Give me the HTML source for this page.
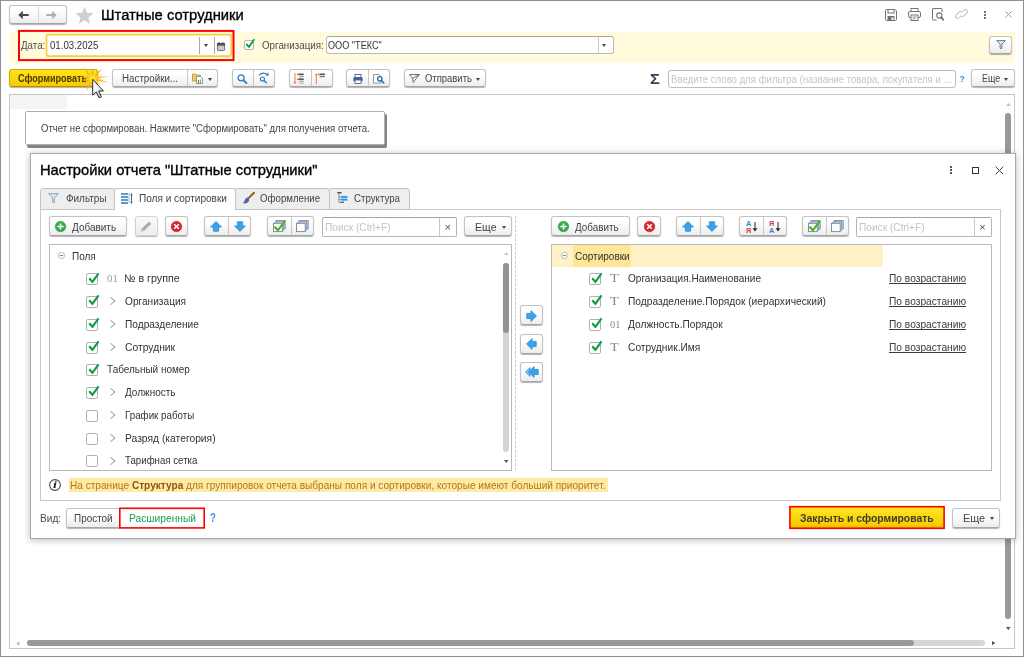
<!DOCTYPE html>
<html lang="ru">
<head>
<meta charset="utf-8">
<title>Штатные сотрудники</title>
<style>
*{box-sizing:border-box;margin:0;padding:0}
html,body{width:1024px;height:657px;overflow:hidden;background:#fff}
body{font-family:"Liberation Sans",sans-serif;font-size:10px;color:#333;position:relative}
.a{position:absolute}
.t{position:absolute;white-space:nowrap;color:#333;z-index:5}
.btn{position:absolute;border:1px solid #c2c2c2;border-bottom-color:#a6a6a6;border-radius:3px;background:linear-gradient(#ffffff 25%,#ededed);box-shadow:0 1px 1px rgba(0,0,0,.3)}
.btn.y{background:linear-gradient(#ffe51a,#f7cb00);border-color:#d0a800;border-bottom-color:#b08f00}
.inp{position:absolute;border:1px solid #b5b5b5;border-top-color:#a3a3a3;border-radius:2px;background:#fff}
.caret{position:absolute;width:0;height:0;border-left:2.5px solid transparent;border-right:2.5px solid transparent;border-top:3px solid #454545}
.sep{position:absolute;width:1px;background:#c8c8c8}
.cb{position:absolute;width:11px;height:11px;border:1px solid #b0b0b0;border-radius:2px;background:#fff}
.cb.c::after{content:"";position:absolute;left:0;top:0}
svg{position:absolute;overflow:visible}
</style>
</head>
<body>
<!-- window border -->
<div class="a" style="left:0;top:0;width:1024px;height:657px;border:1px solid #909090;z-index:60;pointer-events:none"></div>

<!-- ===== header ===== -->
<div class="btn" style="left:9px;top:5px;width:58px;height:19px;border-radius:3px"></div>
<div class="sep" style="left:38px;top:6px;height:17px;background:#d8d8d8"></div>
<svg style="left:18px;top:10.300px" width="11" height="10" viewBox="0 0 11 10"><path d="M0.300 5 L4.800 0.800 V3.900 H10.700 V6.100 H4.800 V9.200 Z" fill="#4a4a4a"/></svg>
<svg style="left:46px;top:10.300px" width="11" height="10" viewBox="0 0 11 10"><path d="M10.700 5 L6.200 0.800 V3.900 H0.300 V6.100 H6.200 V9.200 Z" fill="#b0b0b0"/></svg>
<svg style="left:75px;top:5.800px" width="19" height="19" viewBox="0 0 18 18"><path d="M9 0.600 L11.400 6.500 L17.600 6.900 L12.800 10.900 L14.300 17 L9 13.600 L3.700 17 L5.200 10.900 L0.400 6.900 L6.600 6.500 Z" fill="#d0d0d0"/></svg>

<!-- top right icons -->
<svg style="left:885px;top:9px" width="12" height="12" viewBox="0 0 12 12"><path d="M0.500 1.500 a1 1 0 0 1 1 -1 H10 L11.500 2 V10.500 a1 1 0 0 1 -1 1 H1.500 a1 1 0 0 1 -1 -1 Z" fill="#fff" stroke="#757575"/><rect x="3" y="0.500" width="6" height="3.500" fill="#fff" stroke="#757575"/><rect x="2.500" y="7" width="7" height="4.500" fill="#757575"/><rect x="6.500" y="8.500" width="2" height="2.500" fill="#fff"/></svg>
<svg style="left:908px;top:8px" width="13" height="13" viewBox="0 0 13 13"><rect x="3" y="0.500" width="7" height="3.500" fill="#fff" stroke="#757575"/><rect x="0.500" y="3.500" width="12" height="6" rx="1.500" fill="#fff" stroke="#757575"/><rect x="3" y="7" width="7" height="5.500" fill="#fff" stroke="#757575"/><path d="M4.500 9 H8.500 M4.500 10.800 H7.500" stroke="#757575" stroke-width=".8"/></svg>
<svg style="left:932px;top:8px" width="12" height="13" viewBox="0 0 12 13"><path d="M10 4 V1 a.5 .5 0 0 0 -.5 -.5 H1 a.5 .5 0 0 0 -.5 .5 V11.500 a.5 .5 0 0 0 .5 .5 H4.500" fill="none" stroke="#757575"/><circle cx="7.300" cy="7.500" r="2.600" fill="#fff" stroke="#757575" stroke-width="1.100"/><path d="M9.200 9.400 L11.300 11.800" stroke="#6a6a6a" stroke-width="1.700" stroke-linecap="round"/></svg>
<svg style="left:955px;top:8px" width="13" height="12" viewBox="0 0 13 12"><g fill="none" stroke="#c6c6c6" stroke-width="1.200" stroke-linecap="round"><path d="M5.300 8.800 L4.300 9.800 a2.100 2.100 0 0 1 -3 -3 L4 4.100 a2.100 2.100 0 0 1 3 0"/><path d="M7.700 3.200 L8.700 2.200 a2.100 2.100 0 0 1 3 3 L9 7.900 a2.100 2.100 0 0 1 -3 0"/></g></svg>
<div class="a" style="left:984px;top:11px;width:2px;height:2px;background:#757575;box-shadow:0 3px 0 #757575,0 6px 0 #757575"></div>
<svg style="left:1005px;top:11px" width="7" height="7" viewBox="0 0 7 7"><path d="M0.500 0.500 L6.500 6.500 M6.500 0.500 L0.500 6.500" stroke="#9a9a9a" stroke-width="1"/></svg>

<!-- yellow band -->
<div class="a" style="left:9px;top:32px;width:1006px;height:31px;background:#fffbdc"></div>
<svg style="left:17px;top:29px;z-index:6" width="219" height="34" viewBox="17 29 219 34"><rect x="19" y="30.900" width="214.500" height="29.200" fill="none" stroke="#ff0000" stroke-width="2"/></svg>
<svg style="left:45px;top:33px" width="188" height="25" viewBox="45 33 188 25"><rect x="46.550" y="34.600" width="184.650" height="21.500" rx="1.600" fill="#fff" stroke="#fbcd30" stroke-width="1.600"/></svg>
<div class="sep" style="left:199px;top:37px;height:17px;background:#a8a8a8"></div>
<div class="caret" style="left:203.500px;top:44.300px"></div>
<div class="sep" style="left:214px;top:37px;height:17px;background:#a8a8a8"></div>
<svg style="left:217px;top:41.500px" width="8" height="9" viewBox="0 0 8 9"><rect x="0.400" y="1.400" width="7.200" height="7.200" rx=".8" fill="#c9c9c9" stroke="#555" stroke-width=".8"/><rect x="0" y="1" width="8" height="2.600" fill="#505050"/><rect x="1.600" y="0" width="1" height="1.800" fill="#505050"/><rect x="5.400" y="0" width="1" height="1.800" fill="#505050"/></svg>

<div class="cb" style="left:244px;top:40px;width:10px;height:10px;border-color:#b4b4b4"></div>
<svg class="chk" style="left:244px;top:38px" width="12" height="12" viewBox="0 0 12 12"><path d="M2.200 6 L5 8.800 L10.300 1.300" fill="none" stroke="#0d9b48" stroke-width="1.800"/></svg>
<div class="inp" style="left:326px;top:36px;width:288px;height:18px;border-color:#b9b9b9;border-top-color:#a8a8a8;border-radius:3px"></div>
<div class="sep" style="left:598px;top:37px;height:16px"></div>
<div class="caret" style="left:602.200px;top:44.200px"></div>
<div class="btn" style="left:989px;top:36px;width:23px;height:18px"></div>
<svg style="left:996px;top:40px" width="10" height="9" viewBox="0 0 10 9"><path d="M0.600 0.600 H9.400 L5.900 4.200 V8.400 H4.100 V4.200 Z" fill="#dfe7ee" stroke="#6b7c8c" stroke-width="1" stroke-linejoin="round"/></svg>

<!-- toolbar -->
<div class="btn y" style="left:9px;top:69px;width:89px;height:18px"></div>
<!-- starburst + cursor -->
<svg style="left:80px;top:66px;z-index:7" width="32" height="34" viewBox="80 66 32 34">
<g><path d="M82.0 77.5 L88.4 76.3 L83.6 67.6 L90.9 74.2 L92.9 68.8 L94.0 74.4 L102.4 68.4 L96.1 76.5 L109.0 76.6 L96.5 78.6 L109.6 82.5 L95.7 80.8 L97.8 87.0 L92.5 82.6 L86.3 90.8 L89.3 81.5 L82.4 84.2 L88.0 79.3 Z" fill="#f2b318" opacity=".9"/><path d="M85.0 74.0 L89.8 75.9 L88.0 71.5 L92.3 74.9 L97.0 71.5 L94.9 76.2 L104.0 73.5 L95.6 77.8 L105.0 79.5 L95.4 79.5 L101.0 84.5 L93.7 81.3 L92.0 86.0 L91.0 81.5 L86.0 86.0 L89.4 80.2 L84.0 80.5 L88.8 77.8 Z" fill="#fad43c" opacity=".9"/></g>
<circle cx="92.200" cy="78.300" r="3.200" fill="url(#sg)"/>
<path d="M92.700 79.300 V95.200 L96.300 91.900 L99 97.900 L101.400 96.800 L98.700 91 H103.400 Z" fill="url(#cg)" stroke="#2b2b2b" stroke-width="1"/>
<defs><radialGradient id="sg"><stop offset="0" stop-color="#fff200"/><stop offset=".6" stop-color="#ffe400" stop-opacity=".9"/><stop offset="1" stop-color="#fbd000" stop-opacity="0"/></radialGradient><linearGradient id="cg" x1="0" y1="0" x2="1" y2="1"><stop offset="0" stop-color="#fff"/><stop offset=".5" stop-color="#f2f2f2"/><stop offset="1" stop-color="#9a9a9a"/></linearGradient></defs>
</svg>

<div class="btn" style="left:112px;top:69px;width:106px;height:18px"></div>
<div class="sep" style="left:187px;top:70px;height:16px"></div>
<svg style="left:192px;top:73px" width="11" height="11" viewBox="0 0 11 11"><path d="M0.500 1 H3.500 L4.300 2 H8.500 V8 H0.500 Z" fill="#ecc572" stroke="#c59a3e" stroke-width=".9"/><path d="M4.500 3.500 H8.500 L10.500 5.500 V10.500 H4.500 Z" fill="#fff" stroke="#7b8a99" stroke-width=".9"/><rect x="6" y="7" width="1" height="3" fill="#e04a3a"/><rect x="7.800" y="6.300" width="1" height="3.700" fill="#3aa655"/></svg>
<div class="caret" style="left:207.500px;top:78px"></div>

<div class="btn" style="left:232px;top:69px;width:43px;height:18px"></div>
<div class="sep" style="left:253px;top:70px;height:16px"></div>
<svg style="left:237px;top:73.500px" width="11" height="11" viewBox="0 0 11 11"><circle cx="4.100" cy="3.800" r="3" fill="#fff" stroke="#2f78b7" stroke-width="1.300"/><path d="M6.300 6.100 L9.500 9.200" stroke="#2f78b7" stroke-width="1.700" stroke-linecap="round"/></svg>
<svg style="left:258px;top:72px" width="12" height="12" viewBox="0 0 12 12"><circle cx="4.400" cy="7" r="2" fill="#fff" stroke="#2f78b7" stroke-width="1.100"/><path d="M6 8.600 L8.400 10.800" stroke="#2f78b7" stroke-width="1.400" stroke-linecap="round"/><path d="M0.800 3.200 Q4.800 -0.600 9.300 2.500" fill="none" stroke="#2f78b7" stroke-width="1.100"/><path d="M7.600 3.700 L10.900 3.500 L10.300 0.500 Z" fill="#2f78b7"/></svg>

<div class="btn" style="left:289px;top:69px;width:44px;height:18px"></div>
<div class="sep" style="left:311px;top:70px;height:16px"></div>
<svg style="left:293px;top:73px" width="12" height="12" viewBox="0 0 12 12"><path d="M2 0 V10" stroke="#ee7c3e" stroke-width="1"/><path d="M0.600 8.800 L2 11.300 L3.400 8.800 Z" fill="#ee7c3e"/><g fill="#555"><rect x="3.800" y="0.800" width="1" height="1"/><rect x="5.300" y="0.500" width="5.400" height="1.700"/><rect x="6.300" y="3.200" width="4.400" height="1" fill="#888"/><rect x="3.800" y="5.700" width="1" height="1"/><rect x="5.300" y="5.400" width="5.400" height="1.700"/><rect x="6.300" y="8.100" width="4.400" height="1" fill="#999"/><rect x="6.300" y="10" width="4.400" height="1" fill="#bbb"/></g></svg>
<svg style="left:314px;top:73px" width="12" height="12" viewBox="0 0 12 12"><path d="M2.300 1 V11.300" stroke="#ee7c3e" stroke-width="1"/><path d="M0.900 2.500 L2.300 0 L3.700 2.500 Z" fill="#ee7c3e"/><g fill="#555"><rect x="4" y="0.800" width="1" height="1"/><rect x="5.500" y="0.500" width="5.400" height="1.700"/><rect x="5.500" y="3" width="5.400" height="1.200" fill="#777"/></g></svg>

<div class="btn" style="left:346px;top:69px;width:44px;height:18px"></div>
<div class="sep" style="left:368px;top:70px;height:16px"></div>
<svg style="left:353px;top:73.500px" width="10" height="10" viewBox="0 0 10 10"><rect x="2" y="0.500" width="6" height="3" fill="#fff" stroke="#4a6490" stroke-width=".9"/><rect x="0.300" y="3" width="9.400" height="4.500" rx="1.500" fill="#4a6490"/><rect x="2" y="6" width="6" height="3.500" fill="#fff" stroke="#4a6490" stroke-width=".9"/></svg>
<svg style="left:373px;top:74px" width="12" height="10" viewBox="0 0 12 10"><path d="M0.500 0.500 H5.800 L8 2.700 V9 H0.500 Z" fill="#fff" stroke="#7f8fa0" stroke-width=".9"/><circle cx="6.800" cy="4.800" r="2.200" fill="#fff" stroke="#2c73b5" stroke-width="1.400"/><path d="M8.500 6.600 L10.800 9" stroke="#2c73b5" stroke-width="1.700" stroke-linecap="round"/></svg>

<div class="btn" style="left:404px;top:69px;width:82px;height:18px"></div>
<svg style="left:409px;top:74px" width="11" height="9" viewBox="0 0 11 9"><path d="M0.600 0.600 H10.400 L4.200 8.400 L3.600 4.300 Z M10.400 0.600 L3.600 4.300" fill="#fff" stroke="#5a5a5a" stroke-width=".9" stroke-linejoin="round"/></svg>
<div class="caret" style="left:475.500px;top:78px"></div>

<div class="inp" style="left:668px;top:70px;width:288px;height:18px;border-color:#bcbcbc;border-radius:3px"></div>
<div class="btn" style="left:971px;top:69px;width:44px;height:18px"></div>
<div class="caret" style="left:1004px;top:78px"></div>

<!-- report area -->
<div class="a" style="left:9px;top:94px;width:1006px;height:555px;border:1px solid #c6c6c6;background:#fff"></div>
<div class="a" style="left:10px;top:95px;width:57px;height:14px;background:#f5f5f5"></div>
<div class="a" style="left:25px;top:111px;width:360px;height:34px;border:1px solid #b0b0b0;border-radius:2px;background:#fff;box-shadow:2px 3px 0 #858585"></div>
<!-- report scrollbars -->
<svg style="left:1006px;top:102.500px" width="5" height="3" viewBox="0 0 5 3"><path d="M0 3 L2.500 0 L5 3 Z" fill="#c2c2c2"/></svg>
<div class="a" style="left:1005px;top:113px;width:6px;height:506px;border-radius:3px;background:#999"></div>
<svg style="left:1006px;top:627.200px" width="4.600" height="3" viewBox="0 0 4.600 3"><path d="M0 0 L2.300 3 L4.600 0 Z" fill="#555"/></svg>
<svg style="left:16.300px;top:640.500px" width="3.500" height="5" viewBox="0 0 3.500 5"><path d="M3.500 0 L0 2.500 L3.500 5 Z" fill="#c2c2c2"/></svg>
<div class="a" style="left:27px;top:640px;width:958px;height:6px;border-radius:3px;background:#d6d6d6"></div>
<div class="a" style="left:27px;top:640px;width:887px;height:6px;border-radius:3px;background:#999"></div>
<svg style="left:992.200px;top:640.800px" width="3.400" height="4.200" viewBox="0 0 3.400 4.200"><path d="M0 0 L3.400 2.100 L0 4.200 Z" fill="#555"/></svg>

<!-- ===== DIALOG ===== -->
<div class="a" style="left:30px;top:153px;width:986px;height:386px;background:#fff;border:1px solid #a9a9a9;box-shadow:0 1px 7px rgba(0,0,0,.28)"></div>
<!-- dialog controls -->
<div class="a" style="left:950px;top:166px;width:2px;height:2px;background:#555;box-shadow:0 3px 0 #555,0 6px 0 #555"></div>
<div class="a" style="left:972px;top:167px;width:7px;height:7px;border:1px solid #333"></div>
<svg style="left:995px;top:166px" width="9" height="9" viewBox="0 0 9 9"><path d="M0.600 0.600 L8.400 8.400 M8.400 0.600 L0.600 8.400" stroke="#444" stroke-width="1"/></svg>

<!-- tab panel -->
<div class="a" style="left:40px;top:209px;width:961px;height:292px;border:1px solid #c8c8c8;background:#fff"></div>
<!-- tabs -->
<div class="a" style="left:40px;top:188px;width:75px;height:22px;border:1px solid #c4c4c4;border-radius:3px 3px 0 0;background:#eeeeee"></div>
<div class="a" style="left:235px;top:188px;width:95px;height:22px;border:1px solid #c4c4c4;border-radius:3px 3px 0 0;background:#eeeeee"></div>
<div class="a" style="left:329px;top:188px;width:81px;height:22px;border:1px solid #c4c4c4;border-radius:3px 3px 0 0;background:#eeeeee"></div>
<div class="a" style="left:114px;top:188px;width:122px;height:22px;border:1px solid #c4c4c4;border-bottom:none;border-radius:3px 3px 0 0;background:#fff"></div>
<!-- tab icons -->
<svg style="left:48px;top:193px" width="11" height="10" viewBox="0 0 11 10"><path d="M0.600 0.600 H10.400 L6.400 4.800 V9.400 H4.600 V4.800 Z" fill="#dbe4ec" stroke="#93a6b8" stroke-width="1" stroke-linejoin="round"/></svg>
<svg style="left:121px;top:193px" width="12" height="11" viewBox="0 0 12 11"><g fill="#5f9acb"><rect x="0" y="0" width="7" height="2"/><rect x="0" y="3" width="7" height="2"/><rect x="0" y="6" width="7" height="2"/><rect x="0" y="9" width="7" height="2"/></g><path d="M8 0.500 V10.500" stroke="#2c6ca8" stroke-width="1" stroke-dasharray="1 1"/><path d="M10.500 1 V10" stroke="#2c6ca8" stroke-width="1"/><path d="M9.200 2.200 L10.500 0 L11.800 2.200 Z M9.200 8.800 L10.500 11 L11.800 8.800 Z" fill="#2c6ca8"/></svg>
<svg style="left:242px;top:192px" width="13" height="12" viewBox="0 0 13 12"><path d="M12 0.800 L6 6.600" stroke="#8f5f22" stroke-width="2" stroke-linecap="round"/><path d="M5.600 5.600 Q3 6 2.600 8.400 Q2.200 10.400 0.500 11 Q4.200 12.200 6.400 9.800 Q7.600 8.400 7 7.200 Z" fill="#585fb4"/></svg>
<svg style="left:336.500px;top:192px" width="11" height="11" viewBox="0 0 11 11"><rect x="0.300" y="0" width="4.200" height="1.500" fill="#4b5563"/><path d="M1.900 1.500 V10.300 H5.500" fill="none" stroke="#7d8fa3" stroke-width="1"/><path d="M1.900 5 H4 M1.900 7.600 H4" stroke="#7d8fa3" stroke-width=".9"/><rect x="4" y="4" width="6.500" height="1.900" fill="#3b94d9"/><rect x="4" y="6.700" width="6.500" height="1.900" fill="#3b94d9"/><rect x="3.600" y="9.600" width="3.400" height="1.400" fill="#5b6b7c"/></svg>

<!-- left toolbar -->
<div class="btn" style="left:49px;top:216px;width:78px;height:20px"></div>
<svg class="plus" style="left:55px;top:221px" width="11" height="11" viewBox="0 0 11 11"><circle cx="5.500" cy="5.500" r="5.300" fill="#35ad4e" stroke="#22903c" stroke-width=".5"/><path d="M5.500 2.400 V8.600 M2.400 5.500 H8.600" stroke="#fff" stroke-width="1.500"/></svg>
<div class="btn" style="left:135px;top:216px;width:23px;height:20px;background:linear-gradient(#fafafa,#ededed);border-color:#d2d2d2"></div>
<svg style="left:140px;top:221px" width="12" height="11" viewBox="0 0 12 11"><path d="M9 0.500 L11.300 2.800 L4 10 L1.700 7.700 Z" fill="#9fb49a"/><path d="M1.700 7.700 L4 10 L0.500 10.800 Z" fill="#c9b79a"/></svg>
<div class="btn" style="left:165px;top:216px;width:23px;height:20px"></div>
<svg class="del" style="left:171px;top:221px" width="11" height="11" viewBox="0 0 11 11"><circle cx="5.500" cy="5.500" r="5.300" fill="#d9262c" stroke="#b81c22" stroke-width=".5"/><path d="M3.200 3.200 L7.800 7.800 M7.800 3.200 L3.200 7.800" stroke="#fff" stroke-width="1.600"/></svg>
<div class="btn" style="left:204px;top:216px;width:47px;height:20px"></div>
<div class="sep" style="left:228px;top:217px;height:18px"></div>
<svg class="up" style="left:210px;top:221px" width="12" height="11" viewBox="0 0 12 11"><path d="M6 0.600 L11.400 6 H8.600 V10.200 H3.400 V6 H0.600 Z" fill="#3aa3ea" stroke="#2489cf" stroke-width=".8" stroke-linejoin="round"/></svg>
<svg class="dn" style="left:233.500px;top:221px" width="12" height="11" viewBox="0 0 12 11"><path d="M6 10.400 L11.400 5 H8.600 V0.800 H3.400 V5 H0.600 Z" fill="#3aa3ea" stroke="#2489cf" stroke-width=".8" stroke-linejoin="round"/></svg>
<div class="btn" style="left:267px;top:216px;width:47px;height:20px"></div>
<div class="sep" style="left:291px;top:217px;height:18px"></div>
<svg class="chkall" style="left:273px;top:220px" width="13" height="13" viewBox="0 0 13 13"><rect x="3.500" y="0.500" width="8.700" height="8.300" fill="#c3d1de" stroke="#7b90a6" stroke-width=".9"/><rect x="2" y="1.900" width="8.700" height="8.300" fill="#dde6ee" stroke="#7b90a6" stroke-width=".9"/><rect x="0.500" y="3.300" width="8.700" height="8.300" fill="#fff" stroke="#6f869e" stroke-width=".9"/><path d="M1.500 6.800 L4.800 10.300 L11.800 1.200" fill="none" stroke="#4cb020" stroke-width="2.100"/></svg>
<svg class="unchk" style="left:296px;top:220px" width="13" height="13" viewBox="0 0 13 13"><rect x="3.500" y="0.500" width="8.700" height="8.300" fill="#c3d1de" stroke="#7b90a6" stroke-width=".9"/><rect x="2" y="1.900" width="8.700" height="8.300" fill="#dde6ee" stroke="#7b90a6" stroke-width=".9"/><rect x="0.500" y="3.300" width="8.700" height="8.300" fill="#fff" stroke="#6f869e" stroke-width=".9"/></svg>
<div class="inp" style="left:322px;top:217px;width:135px;height:20px"></div>
<div class="sep" style="left:439px;top:218px;height:18px"></div>
<div class="btn" style="left:464px;top:216px;width:48px;height:20px"></div>
<div class="caret" style="left:501.500px;top:226px"></div>

<!-- dashed separator -->
<div class="a" style="left:515px;top:216px;width:1px;height:254px;background:repeating-linear-gradient(to bottom,#cdcdcd 0,#cdcdcd 3px,transparent 3px,transparent 4.500px)"></div>

<!-- left list -->
<div class="a" style="left:49px;top:244px;width:463px;height:227px;border:1px solid #b9b9b9;background:#fff"></div>
<svg style="left:503.500px;top:252px" width="4.500" height="3" viewBox="0 0 4.500 3"><path d="M0 3 L2.250 0 L4.500 3 Z" fill="#c2c2c2"/></svg>
<div class="a" style="left:503px;top:263px;width:6px;height:189px;border-radius:3px;background:#d4d4d4"></div>
<div class="a" style="left:503px;top:263px;width:6px;height:70px;border-radius:3px;background:#929292"></div>
<svg style="left:503.500px;top:460px" width="4.500" height="3" viewBox="0 0 4.500 3"><path d="M0 0 L2.250 3 L4.500 0 Z" fill="#555"/></svg>
<svg style="left:58.2px;top:252.1px" width="7" height="7" viewBox="0 0 7 7"><circle cx="3.500" cy="3.500" r="3.100" fill="#fff" stroke="#b3b3b3" stroke-width=".9"/><path d="M1.800 3.500 H5.200" stroke="#8c8c8c" stroke-width="1"/></svg>
<div class="cb" style="left:86px;top:273.2px;width:12px;height:12px"></div><svg style="left:86.5px;top:272.6px;z-index:3" width="12" height="12" viewBox="0 0 12 12"><path d="M2.200 5.300 L5.400 8.800 L11.600 0.300" fill="none" stroke="#0d9b48" stroke-width="2.100"/></svg>
<div class="cb" style="left:86px;top:296.0px;width:12px;height:12px"></div><svg style="left:86.5px;top:295.4px;z-index:3" width="12" height="12" viewBox="0 0 12 12"><path d="M2.200 5.300 L5.400 8.800 L11.600 0.300" fill="none" stroke="#0d9b48" stroke-width="2.100"/></svg>
<svg style="left:109.7px;top:297.3px" width="6" height="8" viewBox="0 0 6 8"><path d="M0.500 0.300 L5 4 L0.500 7.700" fill="none" stroke="#8a8a8a" stroke-width="1"/></svg>
<div class="cb" style="left:86px;top:318.8px;width:12px;height:12px"></div><svg style="left:86.5px;top:318.1px;z-index:3" width="12" height="12" viewBox="0 0 12 12"><path d="M2.200 5.300 L5.400 8.800 L11.600 0.300" fill="none" stroke="#0d9b48" stroke-width="2.100"/></svg>
<svg style="left:109.7px;top:320.1px" width="6" height="8" viewBox="0 0 6 8"><path d="M0.500 0.300 L5 4 L0.500 7.700" fill="none" stroke="#8a8a8a" stroke-width="1"/></svg>
<div class="cb" style="left:86px;top:341.5px;width:12px;height:12px"></div><svg style="left:86.5px;top:340.9px;z-index:3" width="12" height="12" viewBox="0 0 12 12"><path d="M2.200 5.300 L5.400 8.800 L11.600 0.300" fill="none" stroke="#0d9b48" stroke-width="2.100"/></svg>
<svg style="left:109.7px;top:342.8px" width="6" height="8" viewBox="0 0 6 8"><path d="M0.500 0.300 L5 4 L0.500 7.700" fill="none" stroke="#8a8a8a" stroke-width="1"/></svg>
<div class="cb" style="left:86px;top:364.2px;width:12px;height:12px"></div><svg style="left:86.5px;top:363.6px;z-index:3" width="12" height="12" viewBox="0 0 12 12"><path d="M2.200 5.300 L5.400 8.800 L11.600 0.300" fill="none" stroke="#0d9b48" stroke-width="2.100"/></svg>
<div class="cb" style="left:86px;top:387.0px;width:12px;height:12px"></div><svg style="left:86.5px;top:386.4px;z-index:3" width="12" height="12" viewBox="0 0 12 12"><path d="M2.200 5.300 L5.400 8.800 L11.600 0.300" fill="none" stroke="#0d9b48" stroke-width="2.100"/></svg>
<svg style="left:109.7px;top:388.3px" width="6" height="8" viewBox="0 0 6 8"><path d="M0.500 0.300 L5 4 L0.500 7.700" fill="none" stroke="#8a8a8a" stroke-width="1"/></svg>
<div class="cb" style="left:86px;top:409.8px;width:12px;height:12px"></div>
<svg style="left:109.7px;top:411.1px" width="6" height="8" viewBox="0 0 6 8"><path d="M0.500 0.300 L5 4 L0.500 7.700" fill="none" stroke="#8a8a8a" stroke-width="1"/></svg>
<div class="cb" style="left:86px;top:432.5px;width:12px;height:12px"></div>
<svg style="left:109.7px;top:433.8px" width="6" height="8" viewBox="0 0 6 8"><path d="M0.500 0.300 L5 4 L0.500 7.700" fill="none" stroke="#8a8a8a" stroke-width="1"/></svg>
<div class="cb" style="left:86px;top:455.2px;width:12px;height:12px"></div>
<svg style="left:109.7px;top:456.6px" width="6" height="8" viewBox="0 0 6 8"><path d="M0.500 0.300 L5 4 L0.500 7.700" fill="none" stroke="#8a8a8a" stroke-width="1"/></svg>

<!-- middle arrows -->
<div class="btn" style="left:520px;top:305px;width:23px;height:20px"></div>
<div class="btn" style="left:520px;top:334px;width:23px;height:20px"></div>
<div class="btn" style="left:520px;top:362px;width:23px;height:20px"></div>
<svg style="left:526px;top:309.500px" width="11" height="12" viewBox="0 0 11 12"><path d="M10.400 6 L5 0.600 V3.400 H0.800 V8.600 H5 V11.400 Z" fill="#3aa3ea" stroke="#2489cf" stroke-width=".8" stroke-linejoin="round"/></svg>
<svg style="left:526px;top:338px" width="11" height="12" viewBox="0 0 11 12"><path d="M0.600 6 L6 0.600 V3.400 H10.200 V8.600 H6 V11.400 Z" fill="#3aa3ea" stroke="#2489cf" stroke-width=".8" stroke-linejoin="round"/></svg>
<svg style="left:524.500px;top:366px" width="14" height="12" viewBox="0 0 14 12"><path d="M0.600 6 L5 1.600 V10.400 Z" fill="#7fc1ee" stroke="#1f7fc4" stroke-width=".7"/><path d="M3.600 6 L9 0.600 V3.400 H13.200 V8.600 H9 V11.400 Z" fill="#3aa3ea" stroke="#2489cf" stroke-width=".8" stroke-linejoin="round"/></svg>

<!-- right toolbar -->
<div class="btn" style="left:551px;top:216px;width:79px;height:20px"></div>
<svg style="left:557.500px;top:221px" width="11" height="11" viewBox="0 0 11 11"><circle cx="5.500" cy="5.500" r="5.300" fill="#35ad4e" stroke="#22903c" stroke-width=".5"/><path d="M5.500 2.400 V8.600 M2.400 5.500 H8.600" stroke="#fff" stroke-width="1.500"/></svg>
<div class="btn" style="left:637px;top:216px;width:24px;height:20px"></div>
<svg style="left:643.500px;top:221px" width="11" height="11" viewBox="0 0 11 11"><circle cx="5.500" cy="5.500" r="5.300" fill="#d9262c" stroke="#b81c22" stroke-width=".5"/><path d="M3.200 3.200 L7.800 7.800 M7.800 3.200 L3.200 7.800" stroke="#fff" stroke-width="1.600"/></svg>
<div class="btn" style="left:676px;top:216px;width:48px;height:20px"></div>
<div class="sep" style="left:700px;top:217px;height:18px"></div>
<svg style="left:682px;top:221px" width="12" height="11" viewBox="0 0 12 11"><path d="M6 0.600 L11.400 6 H8.600 V10.200 H3.400 V6 H0.600 Z" fill="#3aa3ea" stroke="#2489cf" stroke-width=".8" stroke-linejoin="round"/></svg>
<svg style="left:705.500px;top:221px" width="12" height="11" viewBox="0 0 12 11"><path d="M6 10.400 L11.400 5 H8.600 V0.800 H3.400 V5 H0.600 Z" fill="#3aa3ea" stroke="#2489cf" stroke-width=".8" stroke-linejoin="round"/></svg>
<div class="btn" style="left:739px;top:216px;width:48px;height:20px"></div>
<div class="sep" style="left:763px;top:217px;height:18px"></div>
<svg style="left:745.8px;top:220px" width="13" height="13" viewBox="0 0 13 13"><text x="0" y="5.600" font-family="Liberation Sans, sans-serif" font-size="7.200" font-weight="bold" fill="#3a86c8">А</text><text x="0" y="12.600" font-family="Liberation Sans, sans-serif" font-size="7.200" font-weight="bold" fill="#cf3a45">Я</text><path d="M9 2 V9.500" stroke="#2b2b2b" stroke-width="1"/><path d="M6.500 8.300 H11.500 L9 11.600 Z" fill="#2b2b2b"/></svg><svg style="left:768.8px;top:220px" width="13" height="13" viewBox="0 0 13 13"><text x="0" y="5.600" font-family="Liberation Sans, sans-serif" font-size="7.200" font-weight="bold" fill="#cf3a45">Я</text><text x="0" y="12.600" font-family="Liberation Sans, sans-serif" font-size="7.200" font-weight="bold" fill="#3a86c8">А</text><path d="M9 2 V9.500" stroke="#2b2b2b" stroke-width="1"/><path d="M6.500 8.300 H11.500 L9 11.600 Z" fill="#2b2b2b"/></svg>
<div class="btn" style="left:802px;top:216px;width:47px;height:20px"></div>
<div class="sep" style="left:826px;top:217px;height:18px"></div>
<svg style="left:808px;top:220px" width="13" height="13" viewBox="0 0 13 13"><rect x="3.500" y="0.500" width="8.700" height="8.300" fill="#c3d1de" stroke="#7b90a6" stroke-width=".9"/><rect x="2" y="1.900" width="8.700" height="8.300" fill="#dde6ee" stroke="#7b90a6" stroke-width=".9"/><rect x="0.500" y="3.300" width="8.700" height="8.300" fill="#fff" stroke="#6f869e" stroke-width=".9"/><path d="M1.500 6.800 L4.800 10.300 L11.800 1.200" fill="none" stroke="#4cb020" stroke-width="2.100"/></svg>
<svg style="left:831px;top:220px" width="13" height="13" viewBox="0 0 13 13"><rect x="3.500" y="0.500" width="8.700" height="8.300" fill="#c3d1de" stroke="#7b90a6" stroke-width=".9"/><rect x="2" y="1.900" width="8.700" height="8.300" fill="#dde6ee" stroke="#7b90a6" stroke-width=".9"/><rect x="0.500" y="3.300" width="8.700" height="8.300" fill="#fff" stroke="#6f869e" stroke-width=".9"/></svg>
<div class="inp" style="left:856px;top:217px;width:136px;height:20px"></div>
<div class="sep" style="left:974px;top:218px;height:18px"></div>

<!-- right list -->
<div class="a" style="left:551px;top:244px;width:441px;height:227px;border:1px solid #b9b9b9;background:#fff"></div>
<div class="a" style="left:552px;top:245px;width:331px;height:22px;background:#fff2c6"></div>
<div class="a" style="left:573px;top:245px;width:58px;height:22px;background:#ffe597"></div>
<svg style="left:561px;top:252.1px" width="7" height="7" viewBox="0 0 7 7"><circle cx="3.500" cy="3.500" r="3.100" fill="#fff" stroke="#b3b3b3" stroke-width=".9"/><path d="M1.800 3.500 H5.200" stroke="#8c8c8c" stroke-width="1"/></svg>
<div class="cb" style="left:589px;top:273.2px;width:12px;height:12px"></div><svg style="left:589.5px;top:272.6px;z-index:3" width="12" height="12" viewBox="0 0 12 12"><path d="M2.200 5.300 L5.400 8.800 L11.600 0.300" fill="none" stroke="#0d9b48" stroke-width="2.100"/></svg>
<div class="cb" style="left:589px;top:296.0px;width:12px;height:12px"></div><svg style="left:589.5px;top:295.4px;z-index:3" width="12" height="12" viewBox="0 0 12 12"><path d="M2.200 5.300 L5.400 8.800 L11.600 0.300" fill="none" stroke="#0d9b48" stroke-width="2.100"/></svg>
<div class="cb" style="left:589px;top:318.8px;width:12px;height:12px"></div><svg style="left:589.5px;top:318.1px;z-index:3" width="12" height="12" viewBox="0 0 12 12"><path d="M2.200 5.300 L5.400 8.800 L11.600 0.300" fill="none" stroke="#0d9b48" stroke-width="2.100"/></svg>
<div class="cb" style="left:589px;top:341.5px;width:12px;height:12px"></div><svg style="left:589.5px;top:340.9px;z-index:3" width="12" height="12" viewBox="0 0 12 12"><path d="M2.200 5.300 L5.400 8.800 L11.600 0.300" fill="none" stroke="#0d9b48" stroke-width="2.100"/></svg>

<!-- info line -->
<svg style="left:49px;top:478.600px" width="12" height="12" viewBox="0 0 12 12"><circle cx="6" cy="6" r="5.400" fill="#fff" stroke="#4a4a4a" stroke-width="1.100"/></svg>
<div class="a" style="left:69px;top:478px;width:539px;height:14px;background:#ffeaa5"></div>

<!-- bottom -->
<div class="btn" style="left:66px;top:508px;width:54px;height:20px;border-radius:3px 0 0 3px"></div>
<svg style="left:118px;top:506px;z-index:4" width="89" height="24" viewBox="118 506 89 24"><rect x="119.800" y="508.300" width="84.400" height="19.600" fill="#fff" stroke="#ff0000" stroke-width="1.600"/></svg>
<svg style="left:788px;top:504px;z-index:4" width="159" height="27" viewBox="788 504 159 27"><defs><linearGradient id="yg" x1="0" y1="0" x2="0" y2="1"><stop offset="0" stop-color="#ffe822"/><stop offset=".85" stop-color="#f5cc06"/><stop offset="1" stop-color="#d9b400"/></linearGradient></defs><rect x="789.900" y="506.700" width="154.200" height="21.600" fill="url(#yg)" stroke="#ff0000" stroke-width="1.600"/></svg>
<div class="btn" style="left:952px;top:508px;width:48px;height:20px"></div>
<div class="caret" style="left:990.2px;top:517px"></div>

<div style="position:absolute;left:0;top:0;width:1024px;height:657px;will-change:transform;z-index:5">
<div class="t" style='left:100.75px;top:7.00px;font-size:15.5px;line-height:15.5px;transform:scaleX(0.9530);transform-origin:0 0;color:#000;-webkit-text-stroke:0.35px #000;'>Штатные сотрудники</div>
<div class="t" style='left:20.70px;top:41.00px;font-size:10px;line-height:10px;transform:scaleX(0.9733);transform-origin:0 0;color:#4d4d4d;'>Дата:</div>
<div class="t" style='left:50.10px;top:41.00px;font-size:10px;line-height:10px;transform:scaleX(0.9646);transform-origin:0 0;'>01.03.2025</div>
<div class="t" style='left:262.00px;top:41.00px;font-size:10px;line-height:10px;transform:scaleX(0.9789);transform-origin:0 0;color:#4d4d4d;'>Организация:</div>
<div class="t" style='left:328.40px;top:41.00px;font-size:10px;line-height:10px;transform:scaleX(0.9128);transform-origin:0 0;'>ООО "ТЕКС"</div>
<div class="t" style='left:18.20px;top:74.00px;font-size:10px;line-height:10px;transform:scaleX(0.9075);transform-origin:0 0;font-weight:bold;color:#4a3b00;'>Сформировать</div>
<div class="t" style='left:121.70px;top:74.00px;font-size:10px;line-height:10px;transform:scaleX(0.9772);transform-origin:0 0;color:#444;'>Настройки...</div>
<div class="t" style='left:424.70px;top:74.00px;font-size:10px;line-height:10px;transform:scaleX(0.9458);transform-origin:0 0;color:#444;'>Отправить</div>
<div class="t" style='left:650.30px;top:72.00px;font-size:14.5px;line-height:14.5px;transform:scaleX(1.1333);transform-origin:0 0;font-weight:bold;color:#34465a;'>Σ</div>
<div class="t" style='left:671.00px;top:75.00px;font-size:10px;line-height:10px;transform:scaleX(0.9600);transform-origin:0 0;color:#c6c6c6;'>Введите слово для фильтра (название товара, покупателя и ...</div>
<div class="t" style='left:959.40px;top:75.00px;font-size:8.5px;line-height:8.5px;font-weight:bold;color:#3d8fd6;'>?</div>
<div class="t" style='left:981.50px;top:74.00px;font-size:10px;line-height:10px;transform:scaleX(0.8901);transform-origin:0 0;color:#444;'>Еще</div>
<div class="t" style='left:41.30px;top:124.00px;font-size:10px;line-height:10px;transform:scaleX(0.9565);transform-origin:0 0;color:#444;'>Отчет не сформирован. Нажмите "Сформировать" для получения отчета.</div>
<div class="t" style='left:39.59px;top:163.00px;font-size:14.5px;line-height:14.5px;transform:scaleX(1.0135);transform-origin:0 0;color:#000;-webkit-text-stroke:0.35px #000;'>Настройки отчета "Штатные сотрудники"</div>
<div class="t" style='left:65.60px;top:193.00px;font-size:11px;line-height:11px;transform:scaleX(0.9032);transform-origin:0 0;color:#484848;'>Фильтры</div>
<div class="t" style='left:139.40px;top:193.00px;font-size:11px;line-height:11px;transform:scaleX(0.9136);transform-origin:0 0;color:#444;'>Поля и сортировки</div>
<div class="t" style='left:260.20px;top:193.00px;font-size:11px;line-height:11px;transform:scaleX(0.8803);transform-origin:0 0;color:#444;'>Оформление</div>
<div class="t" style='left:354.00px;top:193.00px;font-size:11px;line-height:11px;transform:scaleX(0.8800);transform-origin:0 0;color:#444;'>Структура</div>
<div class="t" style='left:71.50px;top:222.00px;font-size:11px;line-height:11px;transform:scaleX(0.9083);transform-origin:0 0;color:#444;'>Добавить</div>
<div class="t" style='left:324.70px;top:222.00px;font-size:11px;line-height:11px;transform:scaleX(0.9226);transform-origin:0 0;color:#c4c4c4;'>Поиск (Ctrl+F)</div>
<div class="t" style='left:444.50px;top:222.00px;font-size:11px;line-height:11px;color:#555;'>×</div>
<div class="t" style='left:475.40px;top:222.00px;font-size:11px;line-height:11px;transform:scaleX(0.9612);transform-origin:0 0;color:#444;'>Еще</div>
<div class="t" style='left:574.50px;top:222.00px;font-size:11px;line-height:11px;transform:scaleX(0.8960);transform-origin:0 0;color:#444;'>Добавить</div>
<div class="t" style='left:858.70px;top:222.00px;font-size:11px;line-height:11px;transform:scaleX(0.9226);transform-origin:0 0;color:#c4c4c4;'>Поиск (Ctrl+F)</div>
<div class="t" style='left:979.30px;top:222.00px;font-size:11px;line-height:11px;color:#555;'>×</div>
<div class="t" style='left:72.30px;top:251.00px;font-size:11px;line-height:11px;transform:scaleX(0.9046);transform-origin:0 0;'>Поля</div>
<div class="t" style='left:106.70px;top:274.00px;font-size:10.5px;line-height:10.5px;transform:scaleX(1.0244);transform-origin:0 0;color:#9a9a9a;font-family:"Liberation Serif", serif;'>01</div>
<div class="t" style='left:124.43px;top:273.00px;font-size:11px;line-height:11px;transform:scaleX(0.9719);transform-origin:0 0;'>№ в группе</div>
<div class="t" style='left:125.40px;top:296.00px;font-size:11px;line-height:11px;transform:scaleX(0.9204);transform-origin:0 0;'>Организация</div>
<div class="t" style='left:125.40px;top:319.00px;font-size:11px;line-height:11px;transform:scaleX(0.9220);transform-origin:0 0;'>Подразделение</div>
<div class="t" style='left:125.40px;top:342.00px;font-size:11px;line-height:11px;transform:scaleX(0.9380);transform-origin:0 0;'>Сотрудник</div>
<div class="t" style='left:106.70px;top:364.00px;font-size:11px;line-height:11px;transform:scaleX(0.9041);transform-origin:0 0;'>Табельный номер</div>
<div class="t" style='left:125.40px;top:387.00px;font-size:11px;line-height:11px;transform:scaleX(0.9078);transform-origin:0 0;'>Должность</div>
<div class="t" style='left:125.40px;top:410.00px;font-size:11px;line-height:11px;transform:scaleX(0.8887);transform-origin:0 0;'>График работы</div>
<div class="t" style='left:125.40px;top:433.00px;font-size:11px;line-height:11px;transform:scaleX(0.9359);transform-origin:0 0;'>Разряд (категория)</div>
<div class="t" style='left:125.40px;top:455.00px;font-size:11px;line-height:11px;transform:scaleX(0.8798);transform-origin:0 0;'>Тарифная сетка</div>
<div class="t" style='left:575.00px;top:251.00px;font-size:11px;line-height:11px;transform:scaleX(0.9082);transform-origin:0 0;'>Сортировки</div>
<div class="t" style='left:610.40px;top:273.00px;font-size:11.5px;line-height:11.5px;transform:scaleX(1.2571);transform-origin:0 0;color:#8a8a8a;font-family:"Liberation Serif", serif;'>T</div>
<div class="t" style='left:628.40px;top:273.00px;font-size:11px;line-height:11px;transform:scaleX(0.9132);transform-origin:0 0;'>Организация.Наименование</div>
<div class="t" style='left:610.40px;top:296.00px;font-size:11.5px;line-height:11.5px;transform:scaleX(1.2571);transform-origin:0 0;color:#8a8a8a;font-family:"Liberation Serif", serif;'>T</div>
<div class="t" style='left:628.40px;top:296.00px;font-size:11px;line-height:11px;transform:scaleX(0.9274);transform-origin:0 0;'>Подразделение.Порядок (иерархический)</div>
<div class="t" style='left:609.50px;top:320.00px;font-size:10.5px;line-height:10.5px;transform:scaleX(0.9951);transform-origin:0 0;color:#8a8a8a;font-family:"Liberation Serif", serif;'>01</div>
<div class="t" style='left:628.40px;top:319.00px;font-size:11px;line-height:11px;transform:scaleX(0.9271);transform-origin:0 0;'>Должность.Порядок</div>
<div class="t" style='left:610.40px;top:342.00px;font-size:11.5px;line-height:11.5px;transform:scaleX(1.2571);transform-origin:0 0;color:#8a8a8a;font-family:"Liberation Serif", serif;'>T</div>
<div class="t" style='left:628.40px;top:342.00px;font-size:11px;line-height:11px;transform:scaleX(0.9287);transform-origin:0 0;'>Сотрудник.Имя</div>
<div class="t" style='left:889.00px;top:273.00px;font-size:11px;line-height:11px;transform:scaleX(0.9273);transform-origin:0 0;color:#3a3a3a;text-decoration:underline;text-underline-offset:1px;text-decoration-skip-ink:none;text-decoration-thickness:1px;'>По возрастанию</div>
<div class="t" style='left:889.00px;top:296.00px;font-size:11px;line-height:11px;transform:scaleX(0.9273);transform-origin:0 0;color:#3a3a3a;text-decoration:underline;text-underline-offset:1px;text-decoration-skip-ink:none;text-decoration-thickness:1px;'>По возрастанию</div>
<div class="t" style='left:889.00px;top:319.00px;font-size:11px;line-height:11px;transform:scaleX(0.9273);transform-origin:0 0;color:#3a3a3a;text-decoration:underline;text-underline-offset:1px;text-decoration-skip-ink:none;text-decoration-thickness:1px;'>По возрастанию</div>
<div class="t" style='left:889.00px;top:342.00px;font-size:11px;line-height:11px;transform:scaleX(0.9273);transform-origin:0 0;color:#3a3a3a;text-decoration:underline;text-underline-offset:1px;text-decoration-skip-ink:none;text-decoration-thickness:1px;'>По возрастанию</div>
<div class="t" style='left:70.10px;top:480.00px;font-size:11px;line-height:11px;transform:scaleX(0.9173);transform-origin:0 0;color:#ad791c;'>На странице <b style="color:#8a580c">Структура</b> для группировок отчета выбраны поля и сортировки, которые имеют больший приоритет.</div>
<div class="t" style='left:53.40px;top:480.00px;font-size:10.5px;line-height:10.5px;transform:scaleX(1.3333);transform-origin:0 0;font-weight:bold;color:#222;font-family:"Liberation Serif", serif;font-style:italic;'>i</div>
<div class="t" style='left:40.40px;top:513.00px;font-size:11px;line-height:11px;transform:scaleX(0.9214);transform-origin:0 0;color:#4d4d4d;'>Вид:</div>
<div class="t" style='left:73.70px;top:513.00px;font-size:11px;line-height:11px;transform:scaleX(0.9022);transform-origin:0 0;color:#444;'>Простой</div>
<div class="t" style='left:128.90px;top:513.00px;font-size:11px;line-height:11px;transform:scaleX(0.9311);transform-origin:0 0;color:#1f9c57;'>Расширенный</div>
<div class="t" style='left:210.00px;top:512.00px;font-size:12px;line-height:12px;transform:scaleX(0.7857);transform-origin:0 0;font-weight:bold;color:#3d8fd6;'>?</div>
<div class="t" style='left:800.00px;top:513.00px;font-size:11px;line-height:11px;transform:scaleX(0.9429);transform-origin:0 0;font-weight:bold;color:#403c2a;'>Закрыть и сформировать</div>
<div class="t" style='left:963.20px;top:513.00px;font-size:11px;line-height:11px;transform:scaleX(0.9882);transform-origin:0 0;color:#444;'>Еще</div>
</div>
</body>
</html>
